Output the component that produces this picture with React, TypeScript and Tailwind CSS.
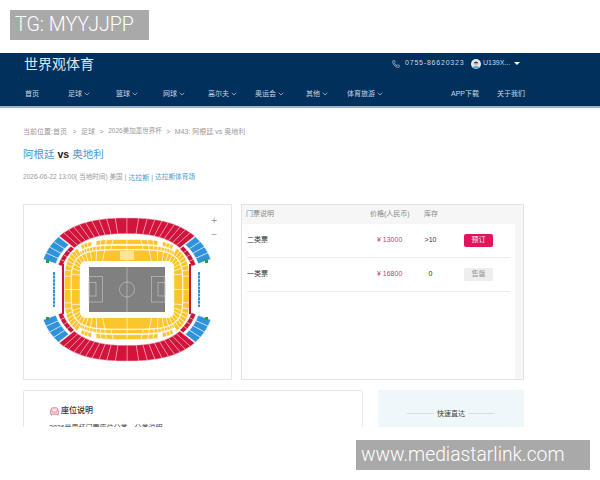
import React from "react";
import { Armchair, ChevronDown, Phone } from "lucide-react";

const navItems = [
  { label: "首页", width: "w-[43px]" },
  { label: "足球", width: "w-[48px]", menu: true },
  { label: "篮球", width: "w-[47px]", menu: true },
  { label: "网球", width: "w-[45px]", menu: true },
  { label: "高尔夫", width: "w-[47px]", menu: true },
  { label: "奥运会", width: "w-[51px]", menu: true },
  { label: "其他", width: "w-[41px]", menu: true },
  { label: "体育旅游", width: "w-[104px]", menu: true },
  { label: "APP下载", width: "w-[46px]" },
  { label: "关于我们", width: "w-[40px]" },
];

const cx = 127;
const cy = 290.5;
const rad = (d: number) => (d * Math.PI) / 180;
const sq = (v: number, n: number) => Math.sign(v) * Math.pow(Math.abs(v), 2 / n);

// outer bowl: slightly squared ellipse
function bowl(t: number, k: number): [number, number] {
  const s = Math.sin(rad(t));
  const c = Math.cos(rad(t));
  return [cx + k * 88 * sq(s, 2.5), cy - k * 71.5 * sq(c, 2.5)];
}

// lower tier: squarish ring between the outer edge and the hole round the pitch
function tier(t: number, f: number): [number, number] {
  const s = Math.sin(rad(t));
  const c = Math.cos(rad(t));
  const ox = 63.5 * sq(s, 3.4);
  const oy = 50 * sq(c, 3.4);
  const ix = 47 * sq(s, 6);
  const iy = 28 * sq(c, 6);
  return [cx + ox + (ix - ox) * f, cy - (oy + (iy - oy) * f)];
}

function sector(fn: (t: number, k: number) => [number, number], a: number, b: number, k1: number, k2: number) {
  const pts: [number, number][] = [];
  for (let i = 0; i <= 4; i++) pts.push(fn(a + ((b - a) * i) / 4, k1));
  for (let i = 4; i >= 0; i--) pts.push(fn(a + ((b - a) * i) / 4, k2));
  return "M" + pts.map((p) => p[0].toFixed(2) + " " + p[1].toFixed(2)).join("L") + "Z";
}

function run(fn: (t: number, k: number) => [number, number], from: number, to: number, count: number, k1: number, k2: number) {
  const step = (to - from) / count;
  return Array.from({ length: count }, (_, i) => sector(fn, from + i * step, from + (i + 1) * step, k1, k2));
}

const red = [...run(bowl, -46, 46, 20, 0.78, 1), ...run(bowl, 134, 226, 20, 0.78, 1)];
const blue = [
  ...run(bowl, 47, 70, 4, 0.85, 1),
  ...run(bowl, 110, 133, 4, 0.85, 1),
  ...run(bowl, 227, 250, 4, 0.85, 1),
  ...run(bowl, -70, -47, 4, 0.85, 1),
];
const thinRed = [
  ...run(bowl, 47, 70, 4, 0.77, 0.82),
  ...run(bowl, 110, 133, 4, 0.77, 0.82),
  ...run(bowl, 227, 250, 4, 0.77, 0.82),
  ...run(bowl, -70, -47, 4, 0.77, 0.82),
];
const yellow = [
  ...run(tier, -36, -22, 3, 0, 0.22),
  ...run(tier, -17, 17, 8, 0, 0.22),
  ...run(tier, 22, 36, 3, 0, 0.22),
  ...run(tier, 144, 158, 3, 0, 0.22),
  ...run(tier, 163, 197, 8, 0, 0.22),
  ...run(tier, 202, 216, 3, 0, 0.22),
  ...run(tier, -42, 42, 20, 0.27, 0.45),
  ...run(tier, 138, 222, 20, 0.27, 0.45),
  ...run(tier, 42, 138, 16, 0.05, 0.45),
  ...run(tier, 222, 318, 16, 0.05, 0.45),
  ...run(tier, 0, 360, 44, 0.48, 1),
];

function StadiumMap() {
  return (
    <svg viewBox="24 206 207 174" className="h-[174px] w-[207px]">
      {red.map((d, i) => (
        <path key={i} d={d} fill="#d2143c" stroke="#f7b8c4" strokeWidth="0.5" />
      ))}
      {blue.map((d, i) => (
        <path key={i} d={d} fill="#2f93dc" stroke="#fff" strokeWidth="0.5" />
      ))}
      {thinRed.map((d, i) => (
        <path key={i} d={d} fill="#c8173c" stroke="#fff" strokeWidth="0.3" />
      ))}
      {yellow.map((d, i) => (
        <path key={i} d={d} fill="#fbc52c" stroke="#fff" strokeWidth="0.5" />
      ))}
      <rect x="120" y="252" width="14" height="9" fill="#fde39a" />
      <rect x="62" y="265" width="2" height="50" fill="#c8173c" />
      <rect x="189" y="265" width="2" height="50" fill="#c8173c" />
      <line x1="54" y1="273" x2="54" y2="308" stroke="#2f93dc" strokeWidth="2" strokeDasharray="3 0.6" />
      <line x1="199" y1="273" x2="199" y2="308" stroke="#2f93dc" strokeWidth="2" strokeDasharray="3 0.6" />
      <rect x="46" y="261" width="3" height="3" fill="#2f9a3c" />
      <rect x="205" y="261" width="3" height="3" fill="#2f9a3c" />
      <rect x="46" y="318" width="3" height="3" fill="#2f9a3c" />
      <rect x="205" y="318" width="3" height="3" fill="#2f9a3c" />
      <rect x="80" y="262" width="94" height="57" rx="6" fill="#fff" />
      <g fill="none" stroke="#c9c9c9" strokeWidth="0.6">
        <rect x="89" y="268" width="76" height="45" fill="#808080" stroke="none" />
        <line x1="127" y1="268" x2="127" y2="313" />
        <circle cx="127" cy="290.5" r="7.5" />
        <rect x="89" y="277.5" width="13.5" height="25.5" />
        <rect x="89" y="283.5" width="7" height="13.5" />
        <rect x="151.5" y="277.5" width="13.5" height="25.5" />
        <rect x="158" y="283.5" width="7" height="13.5" />
      </g>
    </svg>
  );
}

function Avatar() {
  return (
    <svg viewBox="0 0 10 10" className="h-[10px] w-[10px]">
      <circle cx="5" cy="5" r="5" fill="#dfeaf3" />
      <path d="M1.5 8.2C2.5 6.8 7.5 6.8 8.5 8.2A5 5 0 0 1 1.5 8.2Z" fill="#4ba3d8" />
      <circle cx="5" cy="4.6" r="2.2" fill="#e9b99a" />
      <path d="M2.8 4.2C3 2.2 7 2.2 7.2 4.2Z" fill="#3a3a44" />
    </svg>
  );
}

function TicketRow({ name, price, stock, soldOut }: { name: string; price: string; stock: string; soldOut?: boolean }) {
  return (
    <div className="mx-[5px] flex h-[34px] items-center border-b border-[#ededed] text-[7px]">
      <span className="w-[124px] text-[#333]">{name}</span>
      <span className="w-[47px] pl-[6px] text-[#c4436b]">{price}</span>
      <span className="w-[25px] text-center text-[#333]">{stock}</span>
      <button
        className={
          soldOut
            ? "ml-[21px] h-[13px] w-[29px] rounded-[2px] bg-[#eeeeee] text-[#999]"
            : "ml-[21px] h-[13px] w-[29px] rounded-[2px] bg-[#e4125f] text-white"
        }
      >
        {soldOut ? "售罄" : "预订"}
      </button>
    </div>
  );
}

export default function App() {
  return (
    <div className="relative h-[480px] w-[600px] overflow-hidden bg-white font-['Liberation_Sans','Noto_Sans_CJK_SC',sans-serif]">
      <div className="h-[427px] overflow-hidden pt-[53px]">
        <header className="bg-[#02305c] text-[#c9d6e4]">
          <div className="flex h-[29px] items-center pb-[8px] pl-[24px]">
            <span className="w-[368px] text-[14px] leading-none text-[#dbe5ef]">世界观体育</span>
            <Phone className="h-[8px] w-[8px]" />
            <span className="ml-[5px] w-[66px] text-[7px] tracking-[0.8px]">0755-86620323</span>
            <Avatar />
            <span className="ml-[2px] w-[31px] text-[7px]">U139X...</span>
            <span className="h-0 w-0 border-x-[3px] border-t-[3px] border-x-transparent border-t-white" />
          </div>
          <nav className="flex h-[26px] items-center border-b-2 border-[#9fb4cc] pl-[25px] text-[7px]">
            {navItems.map((item) => (
              <div key={item.label} className={`flex items-center ${item.width}`}>
                <span>{item.label}</span>
                {item.menu && <ChevronDown className="ml-[1px] h-[8px] w-[8px]" />}
              </div>
            ))}
          </nav>
        </header>

        <main className="px-[23px]">
          <div className="mt-[18px] flex h-[10px] items-center gap-[4.5px] text-[7px] leading-none text-[#999]">
            <span className="w-[45px] whitespace-nowrap">当前位置:首页</span>
            <span>&gt;</span>
            <span>足球</span>
            <span>&gt;</span>
            <span className="text-[6.5px]">2026美加墨世界杯</span>
            <span>&gt;</span>
            <span>M43: 阿根廷 vs 奥地利</span>
          </div>
          <h1 className="mt-[10px] flex h-[16px] items-center gap-[3px] text-[10.5px] leading-none text-[#4a9ad0]">
            <span>阿根廷</span>
            <span className="font-bold text-[#222]">vs</span>
            <span>奥地利</span>
          </h1>
          <div className="mt-[10px] flex h-[10px] items-center gap-[2px] text-[7px] leading-none text-[#999]">
            <span className="text-[6.6px]">2026-06-22 13:00( 当地时间) 美国 |</span>
            <span className="text-[#4a9ad0]">达拉斯</span>
            <span>|</span>
            <span className="text-[6.7px] text-[#4a9ad0]">达拉斯体育场</span>
          </div>

          <div className="mt-[22px] flex gap-[9px]">
            <div className="relative h-[176px] w-[209px] border border-[#e6e6e6]">
              <StadiumMap />
              <div className="absolute top-[9px] right-[14px] flex flex-col items-center text-[10px] leading-[14px] text-[#999]">
                <span>+</span>
                <span>−</span>
              </div>
            </div>
            <div className="flex h-[176px] w-[283px] border border-[#e2e2e2] bg-[#f6f6f6]">
              <div className="w-[273px]">
                <div className="flex h-[19px] items-center px-[4px] text-[7px] text-[#888]">
                  <span className="w-[124px]">门票说明</span>
                  <span className="w-[54px]">价格(人民币)</span>
                  <span>库存</span>
                </div>
                <div className="h-[155px] bg-white">
                  <TicketRow name="二类票" price="¥ 13000" stock=">10" />
                  <TicketRow name="一类票" price="¥ 16800" stock="0" soldOut />
                </div>
              </div>
            </div>
          </div>

          <div className="mt-[10px] flex w-[501px] gap-[15px]">
            <div className="h-[80px] w-[340px] rounded-[2px] border border-[#e6e6e6] pt-[14px] pl-[25px]">
              <div className="flex items-center gap-[1px] text-[8px] leading-[12px] font-medium text-[#333]">
                <Armchair className="h-[11px] w-[11px] fill-[#f8dde1] text-[#d9808f]" />
                <span>座位说明</span>
              </div>
              <p className="mt-[6px] text-[7px] leading-[9px] text-[#444]">2026世界杯门票座位分类，分类说明</p>
            </div>
            <div className="flex h-[80px] w-[146px] items-start justify-center gap-[3px] bg-[#eef8fa] pt-[18px]">
              <span className="mt-[5px] h-px w-[27px] bg-[#d5dee2]" />
              <span className="text-[7px] leading-[11px] text-[#444]">快速直达</span>
              <span className="mt-[5px] h-px w-[27px] bg-[#d5dee2]" />
            </div>
          </div>
        </main>
      </div>

      <div className="absolute top-[10px] left-[10px] flex h-[30px] w-[139px] items-center bg-[#a9a9a9] pl-[5px] font-['Roboto',sans-serif] text-[19.6px] font-light text-white">
        TG: MYYJJPP
      </div>
      <div className="absolute top-[440px] left-[356px] flex h-[30px] w-[234px] items-center bg-[#a9a9a9] pl-[5px] font-['Roboto',sans-serif] text-[19.3px] font-light text-white">
        www.mediastarlink.com
      </div>
    </div>
  );
}
